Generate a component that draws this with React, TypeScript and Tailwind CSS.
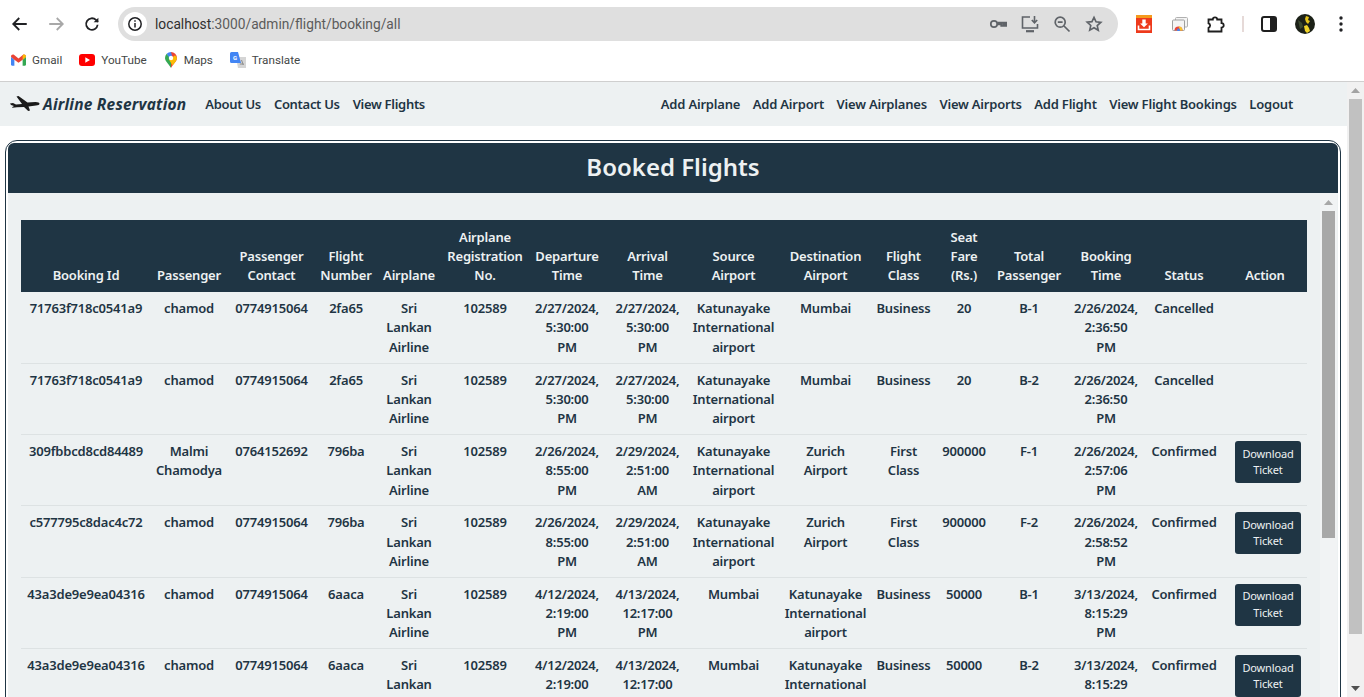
import type { ReactNode } from 'react'

const anchos = [130, 76, 89, 60, 66, 86, 78, 83, 89, 95, 61, 60, 70, 84, 72, 87]

const cabeceras = [
  'Booking Id',
  'Passenger',
  'Passenger\nContact',
  'Flight\nNumber',
  'Airplane',
  'Airplane\nRegistration\nNo.',
  'Departure\nTime',
  'Arrival\nTime',
  'Source\nAirport',
  'Destination\nAirport',
  'Flight\nClass',
  'Seat\nFare\n(Rs.)',
  'Total\nPassenger',
  'Booking\nTime',
  'Status',
  'Action',
]

const KATU = 'Katunayake\nInternational\nairport'
const SRI = 'Sri\nLankan\nAirline'

const filas = [
  ['71763f718c0541a9', 'chamod', '0774915064', '2fa65', SRI, '102589', '2/27/2024,\n5:30:00\nPM', '2/27/2024,\n5:30:00\nPM', KATU, 'Mumbai', 'Business', '20', 'B-1', '2/26/2024,\n2:36:50\nPM', 'Cancelled'],
  ['71763f718c0541a9', 'chamod', '0774915064', '2fa65', SRI, '102589', '2/27/2024,\n5:30:00\nPM', '2/27/2024,\n5:30:00\nPM', KATU, 'Mumbai', 'Business', '20', 'B-2', '2/26/2024,\n2:36:50\nPM', 'Cancelled'],
  ['309fbbcd8cd84489', 'Malmi\nChamodya', '0764152692', '796ba', SRI, '102589', '2/26/2024,\n8:55:00\nPM', '2/29/2024,\n2:51:00\nAM', KATU, 'Zurich\nAirport', 'First\nClass', '900000', 'F-1', '2/26/2024,\n2:57:06\nPM', 'Confirmed'],
  ['c577795c8dac4c72', 'chamod', '0774915064', '796ba', SRI, '102589', '2/26/2024,\n8:55:00\nPM', '2/29/2024,\n2:51:00\nAM', KATU, 'Zurich\nAirport', 'First\nClass', '900000', 'F-2', '2/26/2024,\n2:58:52\nPM', 'Confirmed'],
  ['43a3de9e9ea04316', 'chamod', '0774915064', '6aaca', SRI, '102589', '4/12/2024,\n2:19:00\nPM', '4/13/2024,\n12:17:00\nPM', 'Mumbai', KATU, 'Business', '50000', 'B-1', '3/13/2024,\n8:15:29\nPM', 'Confirmed'],
  ['43a3de9e9ea04316', 'chamod', '0774915064', '6aaca', SRI, '102589', '4/12/2024,\n2:19:00\nPM', '4/13/2024,\n12:17:00\nPM', 'Mumbai', KATU, 'Business', '50000', 'B-2', '3/13/2024,\n8:15:29\nPM', 'Confirmed'],
]

function Marcador({ icono, children }: { icono: ReactNode; children: ReactNode }) {
  return (
    <span className="flex items-center gap-[6px] text-[11.700px] text-[#444746]">
      {icono}
      {children}
    </span>
  )
}

function Flecha({ abajo }: { abajo?: boolean }) {
  return (
    <svg width="9" height="5" viewBox="0 0 9 5" className={abajo ? 'rotate-180' : ''}>
      <path d="M4.5 0 9 5H0z" fill="currentColor" />
    </svg>
  )
}

function BarraChrome() {
  return (
    <div className="h-[82px] shrink-0 bg-white border-b border-[#cfcfcf] flex flex-col">
      <div className="h-[41px] pt-[7px] pl-[10px] flex items-start">
        <div className="w-[108px] h-[34px] flex items-center shrink-0">
          <svg width="18" height="18" viewBox="0 0 24 24" className="ml-[1px]" fill="none" stroke="#202124" strokeWidth="2.4">
            <path d="M21 12H4M11 4l-8 8 8 8" />
          </svg>
          <svg width="18" height="18" viewBox="0 0 24 24" className="ml-[18px]" fill="none" stroke="#a8a8a8" strokeWidth="2.4">
            <path d="M3 12h17M13 4l8 8-8 8" />
          </svg>
          <svg width="18" height="18" viewBox="0 0 24 24" className="ml-[18px]" fill="none" stroke="#202124" strokeWidth="2.4">
            <path d="M19.5 13a7.7 7.7 0 1 1-2.2-6.4L20 9.2" />
            <path d="M20.5 3.5v6.3h-6.3" fill="#202124" strokeWidth="0" />
          </svg>
        </div>
        <div className="w-[1000px] h-[34px] rounded-full bg-[#dfdfdf] flex items-center pl-[5px] pr-[15px] shrink-0">
          <span className="w-[24px] h-[24px] rounded-full bg-white flex items-center justify-center">
            <svg width="16" height="16" viewBox="0 0 16 16" fill="none" stroke="#202124" strokeWidth="1.5">
              <circle cx="8" cy="8" r="6.2" />
              <path d="M8 7v4.4M8 4.2v1.6" />
            </svg>
          </span>
          <span className="ml-[8px] text-[13.750px] text-[#5b5b5b] font-['Roboto',sans-serif]">
            <span className="text-[#303030]">localhost</span>:3000/admin/flight/booking/all
          </span>
          <span className="ml-auto flex items-center gap-[14px] text-[#5f6368]">
            <svg width="18" height="18" viewBox="0 0 18 18" fill="none" stroke="currentColor" strokeWidth="1.7">
              <circle cx="5" cy="9" r="3.2" />
              <path d="M8.2 7.6h9v3.4h-1.6v-1.6h-1.6v1.6h-1.8V9.4H8.2" />
            </svg>
            <svg width="18" height="18" viewBox="0 0 18 18" fill="none" stroke="currentColor" strokeWidth="1.6">
              <path d="M9 2H1.5v11h15V9" />
              <path d="M13.5 1v6.5M10.8 5l2.7 2.8L16.200 5" />
              <path d="M5 16.200h8" strokeWidth="2.2" />
            </svg>
            <svg width="18" height="18" viewBox="0 0 18 18" fill="none" stroke="currentColor" strokeWidth="1.7">
              <circle cx="7.200" cy="7.200" r="5" />
              <path d="M11 11l5.500 5.500M4.800 7.200h4.800" />
            </svg>
            <svg width="18" height="18" viewBox="0 0 24 24" fill="none" stroke="#5f6368" strokeWidth="2.2">
              <path d="M12 3.200l2.700 5.900 6.400.7-4.800 4.300 1.400 6.300L12 17l-5.700 3.200 1.400-6.300-4.800-4.300 6.400-.7z" />
            </svg>
          </span>
        </div>
        <div className="flex items-center h-[34px] ml-[18px] shrink-0">
          <svg width="16" height="18" viewBox="0 0 16 18">
            <rect width="16" height="18" fill="#ee3a1c" />
            <rect width="16" height="3" fill="#f59a1d" />
            <path d="M6.300 4.500h3.400v4h2.200L8 12.300 4.100 8.500h2.200z" fill="#fff" />
            <path d="M2.500 10.500v4h11v-4" fill="none" stroke="#fff" strokeWidth="1.600" />
          </svg>
          <svg width="16" height="14" viewBox="0 0 16 14" className="ml-[20px]">
            <rect x="3.500" y="0.500" width="12" height="9.500" rx="1" fill="#f4f4f4" stroke="#b0b0b0" />
            <rect x="0.500" y="3" width="12" height="10.500" rx="1" fill="#f4f4f4" stroke="#9f9f9f" />
            <path d="M2.500 13.500a4 4 0 0 1 8 0z" fill="#e8453c" />
            <path d="M6.500 9.500a4 4 0 0 1 4 4H8z" fill="#f7c52b" />
            <circle cx="6.500" cy="13" r="1.400" fill="#4285f4" />
          </svg>
          <svg width="18" height="18" viewBox="0 0 18 18" className="ml-[19px]" fill="none" stroke="#1f1f1f" strokeWidth="1.800">
            <path d="M1.500 4.500h4.300a2.200 2.200 0 1 1 4.400 0h4.300v3.700a2.200 2.200 0 1 1 0 4.400v3.900H1.500v-3.700a2.300 2.300 0 0 0 0-4.400z" />
          </svg>
          <span className="ml-[17px] w-[2px] h-[16px] bg-[#e6dad8]" />
          <svg width="16" height="16" viewBox="0 0 16 16" className="ml-[17px]">
            <rect x="1" y="1" width="14" height="14" rx="2" fill="#fff" stroke="#1f1f1f" strokeWidth="2" />
            <rect x="9" y="1" width="6" height="14" fill="#1f1f1f" />
          </svg>
          <svg width="20" height="20" viewBox="0 0 20 20" className="ml-[18px]">
            <circle cx="10" cy="10" r="10" fill="#1c2118" />
            <path d="M3 6l4 3 1 4-3 2z" fill="#3d4a30" />
            <path d="M11 2l3 1-1 3 2 1-2 3-2-2-1-3z" fill="#e6c419" />
            <path d="M9 12l3-1 2 3 1 3-3 2-2-2z" fill="#f1d428" />
          </svg>
          <svg width="4" height="16" viewBox="0 0 4 16" className="ml-[24px]" fill="#202124">
            <circle cx="2" cy="2" r="1.700" />
            <circle cx="2" cy="8" r="1.700" />
            <circle cx="2" cy="14" r="1.700" />
          </svg>
        </div>
      </div>
      <div className="h-[40px] pl-[11px] flex items-center gap-[17px] pb-[1px] font-['Roboto',sans-serif]">
        <Marcador
          icono={
            <svg width="15" height="12" viewBox="0 0 16 12">
              <path d="M0 2.500v8.300c0 .6.500 1.200 1.100 1.200h2.500V5.800z" fill="#4285f4" />
              <path d="M12.400 5.800V12h2.500c.6 0 1.100-.6 1.100-1.200V2.500z" fill="#34a853" />
              <path d="M0 2.500 3.600 5.800 8 9l4.400-3.200L16 2.500C16 .6 14.300-.4 12.900.5L8 4.300 3.100.5C1.700-.4 0 .6 0 2.500z" fill="#ea4335" />
              <path d="M12.400 2v3.800L16 2.500C16 .6 14.300-.4 12.900.5z" fill="#fbbc04" />
            </svg>
          }
        >
          Gmail
        </Marcador>
        <Marcador
          icono={
            <svg width="16" height="12" viewBox="0 0 16 12">
              <rect width="16" height="12" rx="3" fill="#f00" />
              <path d="M6.300 3.200 11 6l-4.700 2.800z" fill="#fff" />
            </svg>
          }
        >
          YouTube
        </Marcador>
        <Marcador
          icono={
            <svg width="12" height="16" viewBox="0 0 12 16" className="mx-[1px]">
              <path d="M6 0a6 6 0 0 1 6 6c0 3-3 5-6 10z" fill="#ea4335" />
              <path d="M1.700 1.800A6 6 0 0 1 6 0l1 4-3 2.500z" fill="#4285f4" />
              <path d="M0 6c0 3 3 5 6 10V8.500L1.700 1.800A6 6 0 0 0 0 6z" fill="#34a853" />
              <path d="M12 6c0 2.500-2.500 4.800-4.400 7.400L4.200 8 10 3.200A6 6 0 0 1 12 6z" fill="#fbbc04" />
              <circle cx="6" cy="6" r="2.200" fill="#fff" />
            </svg>
          }
        >
          Maps
        </Marcador>
        <Marcador
          icono={
            <svg width="16" height="16" viewBox="0 0 16 16">
              <path d="M6 5h10v11H8z" fill="#d5d5d5" />
              <path d="M1.500 0H8l3 11H1.500A1.500 1.500 0 0 1 0 9.500v-8A1.500 1.500 0 0 1 1.500 0z" fill="#4285f4" />
              <text x="3" y="8" fontSize="6" fontWeight="700" fill="#fff" fontFamily="Roboto, sans-serif">G</text>
              <path d="M11.500 8l1.800 5M9.800 12h3.800" stroke="#8a8a8a" strokeWidth="1" />
            </svg>
          }
        >
          Translate
        </Marcador>
      </div>
    </div>
  )
}

function BarraNavegacion() {
  const izquierda = ['About Us', 'Contact Us', 'View Flights']
  const derecha = ['Add Airplane', 'Add Airport', 'View Airplanes', 'View Airports', 'Add Flight', 'View Flight Bookings', 'Logout']
  return (
    <nav className="h-[44px] shrink-0 bg-[#edf1f2] flex items-center pl-[10px] pr-[54px] pt-[2px] text-[#1f3544] text-[13px] font-semibold">
      <svg width="30" height="18" viewBox="0 0 30 18" className="mr-[3px] -mt-[3px]" fill="#1a1a1a">
        <path d="M0 8.500l3-.5 3 1.500 6-.6L6.500 1.500l2-.5 9 6.500 8-.5c2.500 0 4 .8 4 1.700 0 1-1.500 1.500-3.500 1.800l-7.500 1 1.500 4-1.800.5-4.200-4-7 .3-4.500.5-.5-.6L4 11 1 10z" />
      </svg>
      <span className="italic font-bold text-[15.500px] tracking-[0.2px] mr-[19px] -mt-[1px]">Airline Reservation</span>
      <div className="flex gap-[13px] tracking-[-0.3px]">
        {izquierda.map((t) => <a key={t}>{t}</a>)}
      </div>
      <div className="flex gap-[12.500px] ml-auto tracking-[-0.2px]">
        {derecha.map((t) => <a key={t}>{t}</a>)}
      </div>
    </nav>
  )
}

function Tabla() {
  return (
    <table className="table-fixed border-collapse w-[1286px] text-center text-[13px] tracking-[-0.2px] font-semibold leading-[19.330px] text-[#1f3544]">
      <colgroup>
        {anchos.map((w, i) => <col key={i} style={{ width: w }} />)}
      </colgroup>
      <thead>
        <tr className="bg-[#1f3544] text-[#edf1f2] h-[72px]">
          {cabeceras.map((c) => (
            <th
              key={c}
              className={`align-bottom font-semibold whitespace-pre-line leading-[19px] pb-[7px] ${c === 'Action' ? 'pl-[3px]' : 'px-0'}`}
            >
              {c}
            </th>
          ))}
        </tr>
      </thead>
      <tbody>
        {filas.map((fila, i) => (
          <tr key={i} className="h-[71.330px] border-b border-[#dde2e3]">
            {fila.map((d, j) => (
              <td key={j} className="align-top whitespace-pre-line pt-[7px] px-0">{d}</td>
            ))}
            <td className="align-top pt-[6px] pl-[15px] pr-[6px]">
              {fila[14] === 'Confirmed' && (
                <button className="block w-[66px] h-[42px] rounded-[3px] bg-[#1f3544] text-[#edf1f2] text-[11px] tracking-[-0.15px] font-normal leading-[16.500px]">
                  Download
                  <br />
                  Ticket
                </button>
              )}
            </td>
          </tr>
        ))}
      </tbody>
    </table>
  )
}

export default function App() {
  return (
    <div className="h-[697px] w-[1364px] overflow-hidden flex flex-col bg-white font-['Noto_Sans',sans-serif]">
      <BarraChrome />
      <div className="flex-1 min-h-0 flex">
        <div className="w-[1347px] shrink-0 flex flex-col min-h-0">
          <BarraNavegacion />
          <div className="flex-1 min-h-0 pt-[14px] pl-[5px] pr-[6px]">
            <div className="h-[600px] border border-[#1f3544] rounded-[12px] pt-[2px] px-[2px]">
              <div className="h-[50px] pb-[2px] bg-[#1f3544] rounded-t-[6px] flex items-center justify-center text-[#edf1f2] text-[24px] font-semibold">
                Booked Flights
              </div>
              <div className="h-[600px] bg-[#edf1f2] flex">
                <div className="w-[1312px] shrink-0 pl-[13px] pt-[27px]">
                  <Tabla />
                </div>
                <div className="w-[17px] shrink-0 bg-[#f1f3f4] flex flex-col items-center pt-[7px] text-[#a8a8a8]">
                  <Flecha />
                  <div className="w-[13px] h-[327px] mt-[6px] bg-[#a8a8a8]" />
                </div>
              </div>
            </div>
          </div>
        </div>
        <div className="w-[17px] shrink-0 bg-[#f1f1f1] flex flex-col items-center pt-[6px] pb-[6px] text-[#a3a3a3]">
          <Flecha />
          <div className="w-[13px] h-[535px] mt-[6px] bg-[#c1c1c1]" />
          <span className="mt-auto text-[#505050]"><Flecha abajo /></span>
        </div>
      </div>
    </div>
  )
}
